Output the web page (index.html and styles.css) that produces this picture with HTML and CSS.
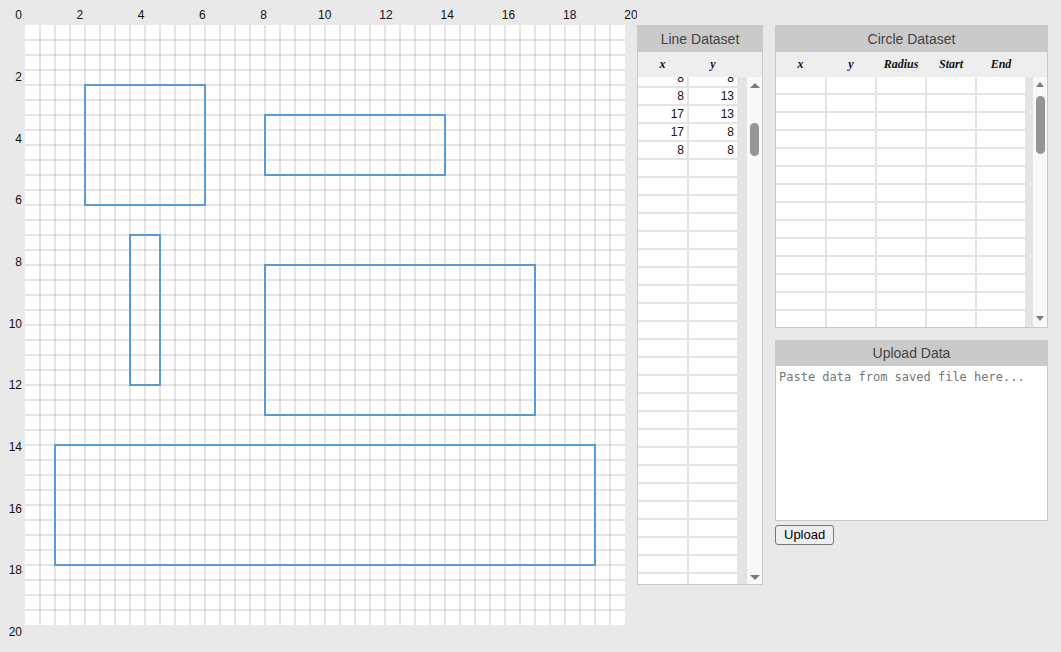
FILE: index.html
```html
<!DOCTYPE html>
<html>
<head>
<meta charset="utf-8">
<title>Datasets</title>
<link rel="stylesheet" href="styles.css">
</head>
<body>
<div class="app">
  <svg class="plot" width="637" height="652" viewBox="0 0 637 652">
    <rect class="paper" x="25" y="25" width="600" height="600"/>
    <path class="grid" d="M40 25V625M55 25V625M70 25V625M85 25V625M100 25V625M115 25V625M130 25V625M145 25V625M160 25V625M175 25V625M190 25V625M205 25V625M220 25V625M235 25V625M250 25V625M265 25V625M280 25V625M295 25V625M310 25V625M325 25V625M340 25V625M355 25V625M370 25V625M385 25V625M400 25V625M415 25V625M430 25V625M445 25V625M460 25V625M475 25V625M490 25V625M505 25V625M520 25V625M535 25V625M550 25V625M565 25V625M580 25V625M595 25V625M610 25V625"/>
    <path class="grid" d="M25 40H625M25 55H625M25 70H625M25 85H625M25 100H625M25 115H625M25 130H625M25 145H625M25 160H625M25 175H625M25 190H625M25 205H625M25 220H625M25 235H625M25 250H625M25 265H625M25 280H625M25 295H625M25 310H625M25 325H625M25 340H625M25 355H625M25 370H625M25 385H625M25 400H625M25 415H625M25 430H625M25 445H625M25 460H625M25 475H625M25 490H625M25 505H625M25 520H625M25 535H625M25 550H625M25 565H625M25 580H625M25 595H625M25 610H625"/>
    <g class="shapes">
      <rect x="85" y="85" width="120" height="120"/>
      <rect x="265" y="115" width="180" height="60"/>
      <rect x="130" y="235" width="30" height="150"/>
      <rect x="265" y="265" width="270" height="150"/>
      <rect x="55" y="445" width="540" height="120"/>
    </g>
    <g class="axis axis-top">
      <text x="18.5" y="19">0</text>
      <text x="79.75" y="19">2</text>
      <text x="141" y="19">4</text>
      <text x="202.25" y="19">6</text>
      <text x="263.5" y="19">8</text>
      <text x="324.75" y="19">10</text>
      <text x="386" y="19">12</text>
      <text x="447.25" y="19">14</text>
      <text x="508.5" y="19">16</text>
      <text x="569.75" y="19">18</text>
      <text x="631" y="19">20</text>
    </g>
    <g class="axis axis-left">
      <text x="22" y="81">2</text>
      <text x="22" y="142.7">4</text>
      <text x="22" y="204.3">6</text>
      <text x="22" y="266">8</text>
      <text x="22" y="327.7">10</text>
      <text x="22" y="389.3">12</text>
      <text x="22" y="451">14</text>
      <text x="22" y="512.7">16</text>
      <text x="22" y="574.3">18</text>
      <text x="22" y="636">20</text>
    </g>
  </svg>

  <section class="panel line-panel">
    <div class="panel-title">Line Dataset</div>
    <div class="colhead line-cols"><span>x</span><span>y</span></div>
    <div class="tbody line-body">
      <div class="rows-clip line-clip">
        <div class="rows line-cols scrolled">
          <div class="cell">8</div><div class="cell">8</div>
          <div class="cell">8</div><div class="cell">13</div>
          <div class="cell">17</div><div class="cell">13</div>
          <div class="cell">17</div><div class="cell">8</div>
          <div class="cell">8</div><div class="cell">8</div>
          <div class="cell"></div><div class="cell"></div>
          <div class="cell"></div><div class="cell"></div>
          <div class="cell"></div><div class="cell"></div>
          <div class="cell"></div><div class="cell"></div>
          <div class="cell"></div><div class="cell"></div>
          <div class="cell"></div><div class="cell"></div>
          <div class="cell"></div><div class="cell"></div>
          <div class="cell"></div><div class="cell"></div>
          <div class="cell"></div><div class="cell"></div>
          <div class="cell"></div><div class="cell"></div>
          <div class="cell"></div><div class="cell"></div>
          <div class="cell"></div><div class="cell"></div>
          <div class="cell"></div><div class="cell"></div>
          <div class="cell"></div><div class="cell"></div>
          <div class="cell"></div><div class="cell"></div>
          <div class="cell"></div><div class="cell"></div>
          <div class="cell"></div><div class="cell"></div>
          <div class="cell"></div><div class="cell"></div>
          <div class="cell"></div><div class="cell"></div>
          <div class="cell"></div><div class="cell"></div>
          <div class="cell"></div><div class="cell"></div>
          <div class="cell"></div><div class="cell"></div>
          <div class="cell"></div><div class="cell"></div>
          <div class="cell"></div><div class="cell"></div>
          <div class="cell"></div><div class="cell"></div>
          <div class="cell"></div><div class="cell"></div>
        </div>
      </div>
      <div class="gutter line-gutter"></div>
      <div class="scrollbar line-scroll">
        <span class="arrow-up"></span>
        <span class="thumb"></span>
        <span class="spacer"></span>
        <span class="arrow-down"></span>
      </div>
    </div>
  </section>

  <div class="right-col">
    <section class="panel circle-panel">
      <div class="panel-title">Circle Dataset</div>
      <div class="colhead circle-cols"><span>x</span><span>y</span><span>Radius</span><span>Start</span><span>End</span></div>
      <div class="tbody circle-body">
        <div class="rows-clip circle-clip">
          <div class="rows circle-cols">
            <div class="cell"></div><div class="cell"></div><div class="cell"></div><div class="cell"></div><div class="cell"></div>
            <div class="cell"></div><div class="cell"></div><div class="cell"></div><div class="cell"></div><div class="cell"></div>
            <div class="cell"></div><div class="cell"></div><div class="cell"></div><div class="cell"></div><div class="cell"></div>
            <div class="cell"></div><div class="cell"></div><div class="cell"></div><div class="cell"></div><div class="cell"></div>
            <div class="cell"></div><div class="cell"></div><div class="cell"></div><div class="cell"></div><div class="cell"></div>
            <div class="cell"></div><div class="cell"></div><div class="cell"></div><div class="cell"></div><div class="cell"></div>
            <div class="cell"></div><div class="cell"></div><div class="cell"></div><div class="cell"></div><div class="cell"></div>
            <div class="cell"></div><div class="cell"></div><div class="cell"></div><div class="cell"></div><div class="cell"></div>
            <div class="cell"></div><div class="cell"></div><div class="cell"></div><div class="cell"></div><div class="cell"></div>
            <div class="cell"></div><div class="cell"></div><div class="cell"></div><div class="cell"></div><div class="cell"></div>
            <div class="cell"></div><div class="cell"></div><div class="cell"></div><div class="cell"></div><div class="cell"></div>
            <div class="cell"></div><div class="cell"></div><div class="cell"></div><div class="cell"></div><div class="cell"></div>
            <div class="cell"></div><div class="cell"></div><div class="cell"></div><div class="cell"></div><div class="cell"></div>
            <div class="cell"></div><div class="cell"></div><div class="cell"></div><div class="cell"></div><div class="cell"></div>
            <div class="cell"></div><div class="cell"></div><div class="cell"></div><div class="cell"></div><div class="cell"></div>
          </div>
        </div>
        <div class="gutter circle-gutter"></div>
        <div class="scrollbar circle-scroll">
          <span class="arrow-up"></span>
          <span class="thumb"></span>
          <span class="spacer"></span>
          <span class="arrow-down"></span>
        </div>
      </div>
    </section>

    <section class="upload">
      <div class="panel-title upload-title">Upload Data</div>
      <textarea class="upload-text" placeholder="Paste data from saved file here..."></textarea>
      <button class="upload-btn" type="button">Upload</button>
    </section>
  </div>
</div>
</body>
</html>
```

FILE: styles.css
```css
html, body {
  margin: 0;
  padding: 0;
  background: #e9e9e9;
}

body {
  font-family: "Liberation Sans", Arial, sans-serif;
  color: #222;
}

.app {
  display: flex;
  align-items: flex-start;
  width: 1061px;
  height: 652px;
  overflow: hidden;
}

/* ---------- plot ---------- */
.plot {
  display: block;
  flex: none;
}

.paper {
  fill: #ffffff;
}

.grid {
  fill: none;
  stroke: rgba(0, 0, 0, 0.1);
  stroke-width: 2;
}

.shapes rect {
  fill: none;
  stroke: #5b9bd5;
  stroke-width: 2;
}

.axis text {
  font-family: "Liberation Sans", Arial, sans-serif;
  font-size: 12px;
  fill: #111;
}

.axis-top text {
  text-anchor: middle;
}

.axis-left text {
  text-anchor: end;
}

/* ---------- panels ---------- */
.panel {
  flex: none;
  border: 1px solid #c9c9c9;
  background: #e4e4e4;
}

.panel-title {
  height: 26px;
  line-height: 26px;
  background: #cacaca;
  color: #444;
  font-size: 14px;
  text-align: center;
}

.colhead {
  height: 25px;
  background: #eeeeee;
  font-family: "Liberation Serif", "Times New Roman", serif;
  font-weight: bold;
  font-style: italic;
  font-size: 12px;
  line-height: 25px;
  color: #111;
  text-align: center;
}

.line-cols {
  display: grid;
  grid-template-columns: 49px 48px;
  column-gap: 2px;
}

.circle-cols {
  display: grid;
  grid-template-columns: 49px 48px 48px 48px 48px;
  column-gap: 2px;
}

.tbody {
  display: flex;
  background: #e4e4e4;
}

.rows-clip {
  overflow: hidden;
  flex: none;
}

.rows {
  row-gap: 2px;
  grid-auto-rows: 16px;
}

.scrolled {
  margin-top: -7px;
}

.cell {
  background: #ffffff;
  font-size: 12px;
  line-height: 16px;
  text-align: right;
  padding-right: 3px;
  color: #111;
}

.gutter {
  flex: none;
}

.scrollbar {
  flex: none;
  display: flex;
  flex-direction: column;
  align-items: center;
  background: #f8f8f8;
}

.spacer {
  flex: 1;
}

.thumb {
  display: block;
  background: #959595;
}

.arrow-up,
.arrow-down {
  display: block;
  width: 0;
  height: 0;
  border-left-style: solid;
  border-right-style: solid;
  border-left-color: transparent;
  border-right-color: transparent;
}

.arrow-up {
  border-bottom-style: solid;
  border-bottom-color: #7a7a7a;
}

.arrow-down {
  border-top-style: solid;
  border-top-color: #7a7a7a;
}

/* line panel */
.line-panel {
  width: 124px;
  margin-top: 25px;
}

.line-body {
  height: 507px;
}

.line-clip {
  width: 99px;
}

.line-gutter {
  width: 10px;
}

.line-scroll {
  width: 15px;
  padding-top: 6px;
  padding-bottom: 4px;
  box-sizing: border-box;
}

.line-scroll .arrow-up,
.line-scroll .arrow-down {
  border-left-width: 5px;
  border-right-width: 5px;
}

.line-scroll .arrow-up {
  border-bottom-width: 5px;
}

.line-scroll .arrow-down {
  border-top-width: 5px;
}

.line-scroll .thumb {
  width: 9px;
  height: 33px;
  border-radius: 4.5px;
  margin-top: 35px;
}

/* right column */
.right-col {
  flex: none;
  width: 273px;
  margin-left: 12px;
  margin-top: 25px;
  display: flex;
  flex-direction: column;
  align-items: flex-start;
}

.circle-panel {
  width: 271px;
}

.circle-body {
  height: 250px;
}

.circle-clip {
  width: 249px;
}

.circle-gutter {
  width: 8px;
}

.circle-scroll {
  width: 14px;
  padding-top: 5px;
  padding-bottom: 6px;
  box-sizing: border-box;
}

.circle-scroll .arrow-up,
.circle-scroll .arrow-down {
  border-left-width: 4px;
  border-right-width: 4px;
}

.circle-scroll .arrow-up {
  border-bottom-width: 5px;
}

.circle-scroll .arrow-down {
  border-top-width: 5px;
}

.circle-scroll .thumb {
  width: 9px;
  height: 58px;
  border-radius: 4.5px;
  margin-top: 9px;
}

/* upload */
.upload {
  margin-top: 12px;
  width: 273px;
  display: flex;
  flex-direction: column;
  align-items: flex-start;
}

.upload-title {
  width: 273px;
}

.upload-text {
  display: block;
  width: 273px;
  height: 155px;
  box-sizing: border-box;
  margin: 0;
  border: 1px solid #c8c8c8;
  border-top: none;
  padding: 4px 3px 3px;
  font-family: "DejaVu Sans Mono", "Liberation Mono", monospace;
  font-size: 12px;
  line-height: 15px;
  resize: none;
  background: #fff;
  outline: none;
}

.upload-text::placeholder {
  color: #757575;
}

.upload-btn {
  margin-top: 4px;
  height: 20px;
  padding: 0 8px;
  font-family: "Liberation Sans", Arial, sans-serif;
  font-size: 13px;
  line-height: 18px;
  color: #000;
  background: #efefef;
  border: 1px solid #767676;
  border-radius: 3px;
}
```
